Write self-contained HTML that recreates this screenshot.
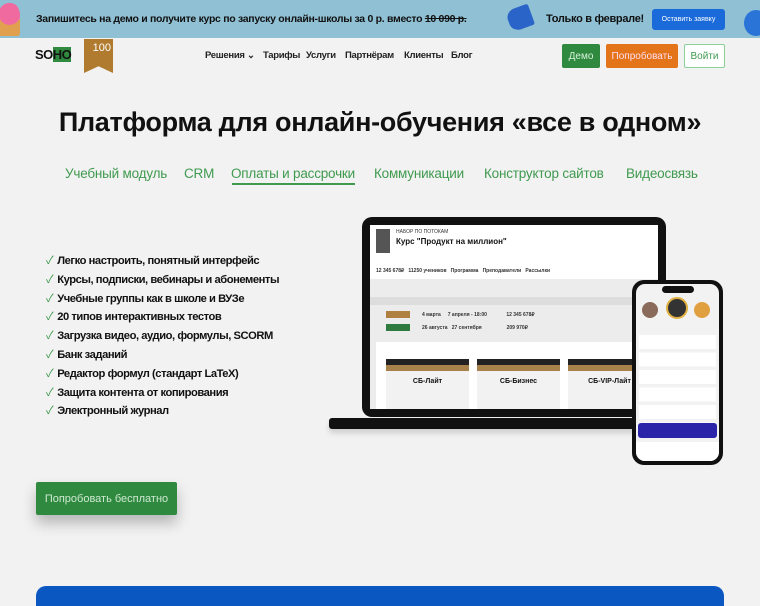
<!DOCTYPE html>
<html><head><meta charset="utf-8"><style>
*{margin:0;padding:0;box-sizing:border-box}
body{width:760px;height:600px;overflow:hidden;background:#f2f2f2;font-family:"Liberation Sans","Noto Sans CJK SC",sans-serif;position:relative;color:#111}
.abs{position:absolute}
.top{left:0;top:0;width:760px;height:38px;background:#8fc0d4}
.nav a{position:absolute;top:50px;font-size:9.5px;font-weight:bold;color:#222;letter-spacing:-0.3px;white-space:nowrap}
.tabs span{position:absolute;top:166px;font-size:13.5px;color:#3f9a4f;letter-spacing:-0.2px;white-space:nowrap}
ul{list-style:none;position:absolute;left:46px;top:252px}
li{font-size:11.2px;font-weight:bold;height:18.8px;line-height:18px;color:#111;letter-spacing:-0.45px;white-space:nowrap}
li:before{content:"✓";color:#3f9a4f;margin-right:4px;font-weight:normal}
.sm{font-size:5px;color:#333}
.btn{display:flex;align-items:center;justify-content:center}
</style></head><body>
<div class="abs top"></div>
<div class="abs" style="left:-6px;top:2px;width:26px;height:34px;background:radial-gradient(circle at 60% 35%,#f06aa0 0 40%,transparent 41%),linear-gradient(#8fc0d4 50%,#e0a050 50%);border-radius:40% 40% 10% 10%"></div>
<div class="abs" style="left:36px;top:13px;font-size:10.5px;font-weight:bold;color:#111;letter-spacing:-0.3px;white-space:nowrap">Запишитесь на демо и получите курс по запуску онлайн-школы за 0 р. вместо <s>10 090 р.</s></div>
<div class="abs" style="left:508px;top:7px;width:24px;height:22px;background:#2a64c8;border-radius:40% 10% 10% 40%;transform:rotate(-20deg)"></div>
<div class="abs" style="left:546px;top:13px;font-size:11px;font-weight:bold;letter-spacing:-0.3px">Только в феврале!</div>
<div class="abs btn" style="left:652px;top:9px;width:73px;height:21px;background:#1a6ad9;border-radius:3px;color:#fff;font-size:7px">Оставить заявку</div>
<div class="abs" style="left:744px;top:10px;width:24px;height:26px;background:#2a74d8;border-radius:50%"></div>

<div class="abs" style="left:35px;top:47px;font-size:13px;font-weight:bold;letter-spacing:-0.5px">SO<span style="background:#2f8a3f;color:#111">HO</span></div>
<div class="abs" style="left:84px;top:39px;width:29px;height:34px;background:#b07b2e;clip-path:polygon(0 0,100% 0,100% 100%,50% 80%,0 100%);color:#fff;font-size:11px;text-align:right;padding:3px 2px 0 0">100</div>
<div class="nav">
<a style="left:205px">Решения ⌄</a><a style="left:263px">Тарифы</a><a style="left:306px">Услуги</a><a style="left:345px">Партнёрам</a><a style="left:404px">Клиенты</a><a style="left:451px">Блог</a></div>
<div class="abs btn" style="left:562px;top:44px;width:38px;height:24px;background:#2f8a3f;border-radius:2px;color:#d8f0dc;font-size:10px">Демо</div>
<div class="abs btn" style="left:606px;top:44px;width:72px;height:24px;background:#e4741a;border-radius:2px;color:#fde;font-size:10px">Попробовать</div>
<div class="abs btn" style="left:684px;top:44px;width:41px;height:24px;border:1.5px solid #8ccf98;background:#fff;border-radius:2px;color:#3f9a4f;font-size:10px">Войти</div>

<div class="abs" style="left:0;width:760px;top:107px;text-align:center;font-size:27px;font-weight:bold;letter-spacing:-0.3px">Платформа для онлайн-обучения «все в одном»</div>
<div class="tabs"><span style="left:65px">Учебный модуль</span><span style="left:184px">CRM</span><span style="left:231px">Оплаты и рассрочки</span><span style="left:374px">Коммуникации</span><span style="left:484px">Конструктор сайтов</span><span style="left:626px">Видеосвязь</span></div>
<div class="abs" style="left:232px;top:183px;width:123px;height:2px;background:#3f9a4f"></div>

<ul><li>Легко настроить, понятный интерфейс</li><li>Курсы, подписки, вебинары и абонементы</li><li>Учебные группы как в школе и ВУЗе</li><li>20 типов интерактивных тестов</li><li>Загрузка видео, аудио, формулы, SCORM</li><li>Банк заданий</li><li>Редактор формул (стандарт LaTeX)</li><li>Защита контента от копирования</li><li>Электронный журнал</li></ul>

<div class="abs btn" style="left:36px;top:482px;width:141px;height:33px;background:#2f8a3f;border-radius:2px;color:#cfe9d3;font-size:11px;box-shadow:0 8px 14px rgba(0,0,0,.25)">Попробовать бесплатно</div>

<!-- laptop -->
<div class="abs" style="left:362px;top:217px;width:304px;height:200px;background:#111;border-radius:10px"></div>
<div class="abs" style="left:370px;top:225px;width:288px;height:184px;background:#fff;overflow:hidden">
 <div class="abs" style="left:6px;top:4px;width:14px;height:24px;background:#555"></div>
 <div class="abs sm" style="left:26px;top:4px">НАБОР ПО ПОТОКАМ</div>
 <div class="abs" style="left:26px;top:12px;font-size:8px;font-weight:bold">Курс "Продукт на миллион"</div>
 <div class="abs sm" style="left:6px;top:43px;font-weight:bold">12 345 678₽ &nbsp; 11250 учеников &nbsp; Программа &nbsp; Преподаватели &nbsp; Рассылки</div>
 <div class="abs" style="left:0;top:54px;width:288px;height:130px;background:#ececec"></div>
 <div class="abs" style="left:0;top:72px;width:288px;height:8px;background:#ddd"></div>
 <div class="abs" style="left:16px;top:86px;width:24px;height:7px;background:#b08040"></div>
 <div class="abs" style="left:16px;top:99px;width:24px;height:7px;background:#2f7a3f"></div>
 <div class="abs sm" style="left:52px;top:87px;font-weight:bold">4 марта &nbsp;&nbsp;&nbsp; 7 апреля - 18:00 &nbsp;&nbsp;&nbsp;&nbsp;&nbsp;&nbsp;&nbsp;&nbsp;&nbsp;&nbsp;&nbsp;&nbsp; 12 345 678₽</div>
 <div class="abs sm" style="left:52px;top:100px;font-weight:bold">26 августа &nbsp; 27 сентября &nbsp;&nbsp;&nbsp;&nbsp;&nbsp;&nbsp;&nbsp;&nbsp;&nbsp;&nbsp;&nbsp;&nbsp;&nbsp;&nbsp;&nbsp;&nbsp; 209 970₽</div>
 <div class="abs" style="left:6px;top:117px;width:282px;height:70px;background:#fff"></div>
 <div class="abs" style="left:16px;top:134px;width:83px;height:50px;background:#f2f2f2;border-top:6px solid #222"></div>
 <div class="abs" style="left:107px;top:134px;width:83px;height:50px;background:#f2f2f2;border-top:6px solid #222"></div>
 <div class="abs" style="left:198px;top:134px;width:83px;height:50px;background:#f2f2f2;border-top:6px solid #222"></div>
 <div class="abs" style="left:16px;top:140px;width:272px;height:6px;background:linear-gradient(90deg,#a8814a 0 83px,transparent 83px 91px,#a8814a 91px 174px,transparent 174px 182px,#a8814a 182px)"></div>
 <div class="abs" style="left:16px;top:153px;width:83px;text-align:center;font-size:7px;font-weight:bold">СБ-Лайт</div>
 <div class="abs" style="left:107px;top:153px;width:83px;text-align:center;font-size:7px;font-weight:bold">СБ-Бизнес</div>
 <div class="abs" style="left:198px;top:153px;width:83px;text-align:center;font-size:7px;font-weight:bold">СБ-VIP-Лайт</div>
</div>
<div class="abs" style="left:329px;top:418px;width:371px;height:11px;background:#111;border-radius:3px;box-shadow:0 4px 6px rgba(0,0,0,.15)"></div>

<!-- phone -->
<div class="abs" style="left:632px;top:280px;width:91px;height:185px;background:#111;border-radius:12px"></div>
<div class="abs" style="left:636px;top:284px;width:83px;height:177px;background:#f2f2f2;border-radius:9px;overflow:hidden">
 <div class="abs" style="left:26px;top:2px;width:32px;height:7px;background:#111;border-radius:4px"></div>
 <div class="abs" style="left:6px;top:18px;width:16px;height:16px;border-radius:50%;background:#8a6a5a"></div>
 <div class="abs" style="left:30px;top:13px;width:22px;height:22px;border-radius:50%;background:#333;border:2px solid #e0b040"></div>
 <div class="abs" style="left:58px;top:18px;width:16px;height:16px;border-radius:50%;background:#e0a040"></div>
 <div class="abs" style="left:3px;top:51px;width:77px;height:88px;background:repeating-linear-gradient(#fff 0 14px,#f2f2f2 14px 17.5px)"></div>
 <div class="abs" style="left:2px;top:139px;width:79px;height:15px;background:#2a24a8;border-radius:3px"></div>
 <div class="abs" style="left:0;top:158px;width:83px;height:19px;background:#fff"></div>
</div>

<div class="abs" style="left:36px;top:586px;width:688px;height:20px;background:#0a57c2;border-radius:10px 10px 0 0"></div>
</body></html>
